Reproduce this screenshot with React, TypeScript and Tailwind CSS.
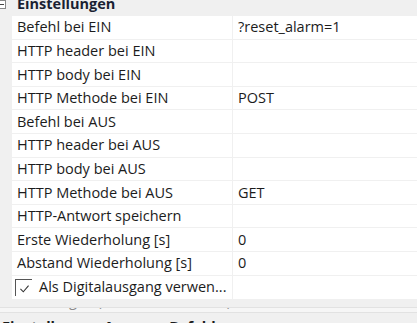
const rows: { label: string; value?: string }[] = [
  { label: "Befehl bei EIN", value: "?reset_alarm=1" },
  { label: "HTTP header bei EIN" },
  { label: "HTTP body bei EIN" },
  { label: "HTTP Methode bei EIN", value: "POST" },
  { label: "Befehl bei AUS" },
  { label: "HTTP header bei AUS" },
  { label: "HTTP body bei AUS" },
  { label: "HTTP Methode bei AUS", value: "GET" },
  { label: "HTTP-Antwort speichern" },
  { label: "Erste Wiederholung [s]", value: "0" },
  { label: "Abstand Wiederholung [s]", value: "0" }
];

function Row({ label, value }: { label: string; value?: string }) {
  return (
    <div className="flex h-[23.6px] border-b border-[#f0f0f0] bg-white">
      <div className="flex w-[221px] shrink-0 items-center border-r border-[#f0f0f0] pl-[5px]">
        <span className="whitespace-nowrap">{label}</span>
      </div>
      <div className="flex items-center pl-[5px]">{value}</div>
    </div>
  );
}

export default function App() {
  return (
    <div
      className="h-[323px] w-[417px] overflow-hidden bg-[#f0f0f0] text-[14.5px] text-[#1c1c1c]"
      style={{ fontFamily: '"Open Sans", "Noto Sans", sans-serif' }}
    >
      <div className="-mt-[8px] flex h-[24px] items-center">
        <div className="ml-[-3px] flex h-[9px] w-[9px] items-center justify-center border border-[#888] bg-white">
          <div className="h-px w-[5px] bg-[#444]" />
        </div>
        <span className="ml-[11px] font-bold text-[#1a1f33]">Einstellungen</span>
      </div>
      <div className="ml-[12px]">
        {rows.map((r) => (
          <Row key={r.label} label={r.label} value={r.value} />
        ))}
        <div className="flex h-[23.6px] bg-white">
          <div className="flex w-[221px] shrink-0 items-center border-r border-[#f0f0f0] pl-[3px]">
            <div className="relative h-[17px] w-[17px] border-l border-t border-[#555]">
              <svg viewBox="0 0 16 16" className="absolute left-[2px] top-[2px] h-[13px] w-[13px]">
                <path d="M3 8.5 L6.5 12 L13 4.5" fill="none" stroke="#333" strokeWidth="1.3" />
              </svg>
            </div>
            <span className="ml-[7px] whitespace-nowrap">Als Digitalausgang verwen...</span>
          </div>
        </div>
      </div>
      <div className="h-[8px]" />
      <div className="h-[6px] overflow-hidden border-y border-[#e2e2e2] bg-[#f6f6f6]">
        <div className="-mt-[12px] pl-[3px] leading-[10px] text-[#8a8a8a]">
          Einstellungen (Modbus/Webhook)
        </div>
      </div>
      <div className="mt-[9px] pl-[2px] font-bold leading-[10px]">
        Einstellungen Ausgang Befehle
      </div>
    </div>
  );
}
